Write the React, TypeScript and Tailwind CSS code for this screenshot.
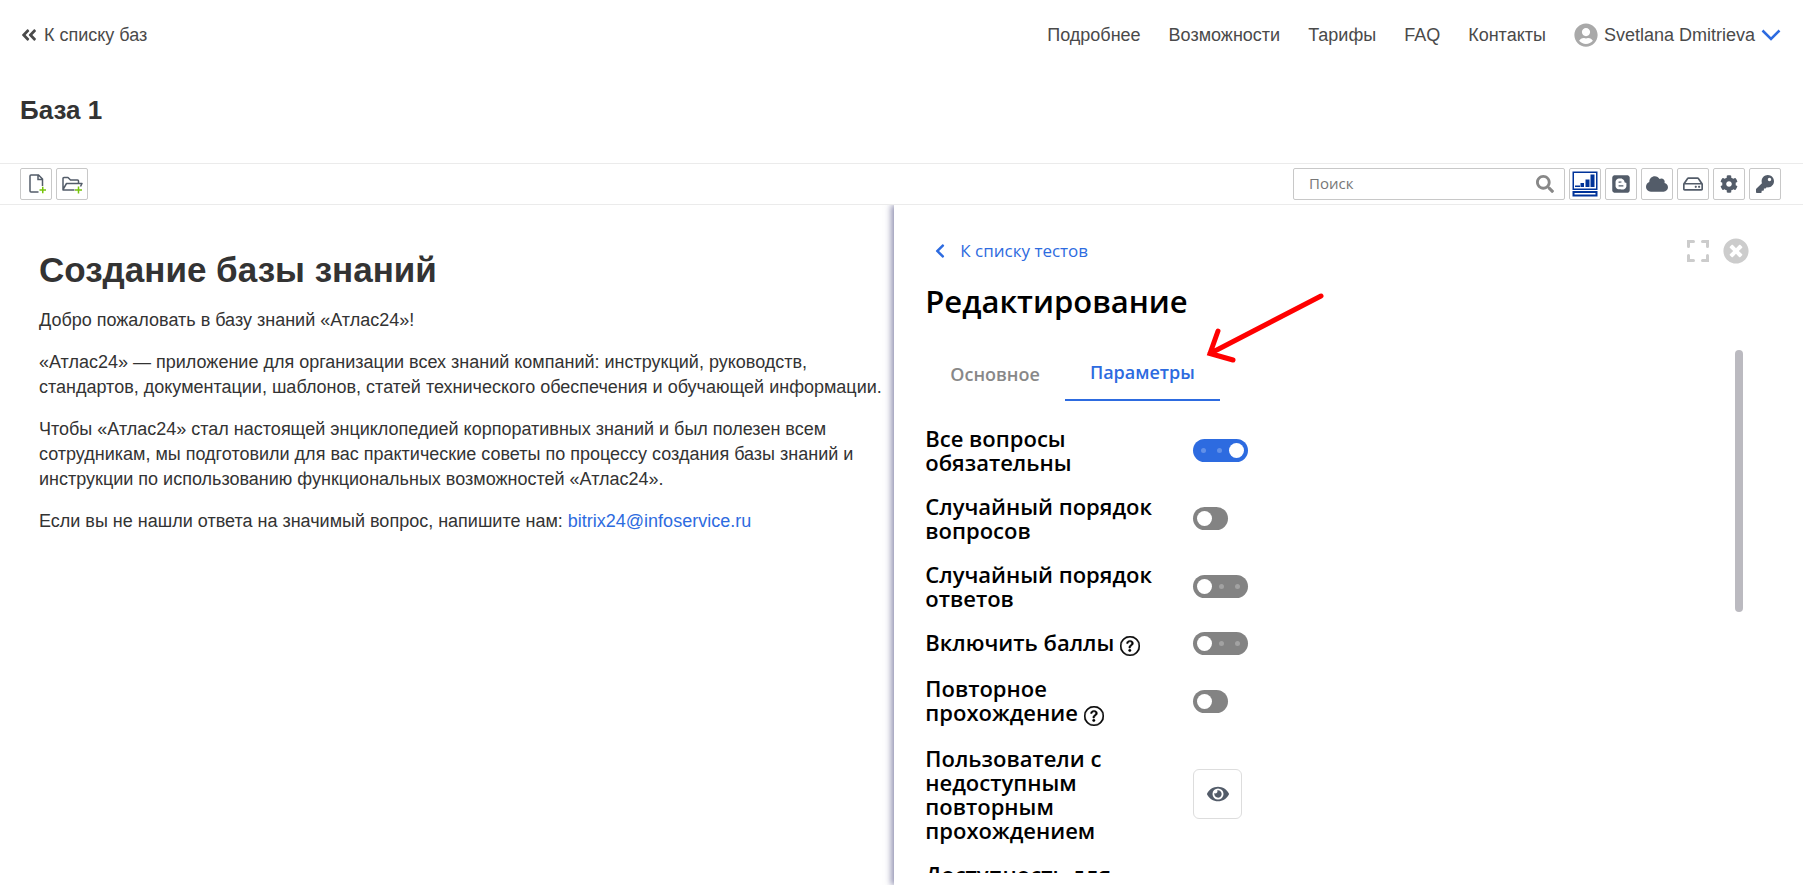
import type { ReactNode } from "react";
import { useState } from "react";
import {
  FaAngleDoubleLeft,
  FaBlogger,
  FaChevronLeft,
  FaCloud,
  FaCog,
  FaEye,
  FaKey,
  FaRegHdd,
  FaSearch,
  FaTimesCircle,
  FaUserCircle,
} from "react-icons/fa";
import { BsQuestionCircle } from "react-icons/bs";

const navLinks = ["Подробнее", "Возможности", "Тарифы", "FAQ", "Контакты"];

export default function App() {
  return (
    <div className="flex h-screen flex-col overflow-hidden bg-white font-['Liberation_Sans',Arial,sans-serif] text-lg text-[#333]">
      <Header />
      <h1 className="px-5 pt-[22px] pb-[35px] text-[26px] leading-9 font-bold">База 1</h1>
      <Toolbar />
      <main className="flex min-h-0 flex-1 overflow-hidden">
        <Article />
        <TestPanel />
      </main>
    </div>
  );
}

function Header() {
  return (
    <header className="flex h-[70px] shrink-0 items-center justify-between pr-[22px] pl-5 text-[#4a4a4a]">
      <a href="#bases" className="flex items-center gap-1.5">
        <FaAngleDoubleLeft className="size-[18px]" />
        К списку баз
      </a>
      <nav className="flex items-center gap-7">
        {navLinks.map((label) => (
          <a key={label} href="#nav">
            {label}
          </a>
        ))}
        <button type="button" className="flex items-center gap-1.5">
          <FaUserCircle className="size-6 text-[#a9a9a9]" />
          Svetlana Dmitrieva
          <svg viewBox="0 0 20 12" className="h-3 w-5" fill="none" stroke="#2d6be0" strokeWidth="2.5">
            <path d="M1.5 1.5 10 10l8.500-8.500" />
          </svg>
        </button>
      </nav>
    </header>
  );
}

function ToolButton({ label, children }: { label: string; children: ReactNode }) {
  return (
    <button
      type="button"
      aria-label={label}
      className="flex size-8 items-center justify-center rounded-xs border border-[#c8c8c8] bg-white text-[#535c69]"
    >
      {children}
    </button>
  );
}

function Toolbar() {
  return (
    <div className="flex shrink-0 items-center justify-between border-y border-[#ebebeb] py-1 pr-[22px] pl-5">
      <div className="flex gap-1">
        <ToolButton label="Новая статья">
          <svg viewBox="0 0 20 22" className="h-[22px] w-5" fill="none" stroke="currentColor" strokeWidth="1.5">
            <path d="M12.500 19H5a1 1 0 0 1-1-1V3a1 1 0 0 1 1-1h7.500l4 4v7M12 2v4.500h4.500" />
            <path d="M13.500 17h6.500M16.750 13.750v6.500" stroke="#76c40b" />
          </svg>
        </ToolButton>
        <ToolButton label="Новая папка">
          <svg viewBox="0 0 22 20" className="h-5 w-[22px]" fill="none" stroke="currentColor" strokeWidth="1.5" strokeLinejoin="round">
            <path d="M13.500 16H2V4.500a1 1 0 0 1 1-1h4l2.500 2.500h7a1 1 0 0 1 1 1v2M2 15.500l3.500-6H21l-1.500 3" />
            <path d="M14 16h7M17.500 12.500v7" stroke="#76c40b" />
          </svg>
        </ToolButton>
      </div>
      <div className="flex gap-1">
        <div className="flex h-8 w-[272px] items-center rounded-xs border border-[#c8c8c8] pr-[10px] pl-[15px]">
          <input
            type="search"
            aria-label="Поиск"
            placeholder="Поиск"
            className="min-w-0 flex-1 font-['Open_Sans',sans-serif] text-[15px] outline-none placeholder:text-[#777]"
          />
          <FaSearch className="size-[18px] text-[#888]" />
        </div>
        <ToolButton label="Статистика">
          <svg viewBox="0 0 26 26" className="size-[26px] shrink-0" fill="#003399">
            <path fillRule="evenodd" d="M.500.500h25v18.500H.500zM2 2v15.500h22V2z" />
            <path d="M3 14.500h5V16H3zM8.500 12H12v4H8.500zM13.500 8.500h4V16h-4zM18.500 3.500h4V16h-4z" />
            <path fillRule="evenodd" d="M.500 20h25v5.500H.500zM2.500 22v1.500h21V22z" />
          </svg>
        </ToolButton>
        <ToolButton label="Блог">
          <FaBlogger className="size-5" />
        </ToolButton>
        <ToolButton label="Облако">
          <FaCloud className="size-[22px]" />
        </ToolButton>
        <ToolButton label="Диск">
          <FaRegHdd className="size-5" />
        </ToolButton>
        <ToolButton label="Настройки">
          <FaCog className="size-[18px]" />
        </ToolButton>
        <ToolButton label="Права доступа">
          <FaKey className="size-[18px]" />
        </ToolButton>
      </div>
    </div>
  );
}

function Article() {
  return (
    <article className="min-w-0 flex-1 space-y-[17px] pt-11 pr-3 pl-[39px] leading-[25px]">
      <h2 className="text-[35px] leading-[42px] font-bold">Создание базы знаний</h2>
      <p>Добро пожаловать в базу знаний «Атлас24»!</p>
      <p>
        «Атлас24» — приложение для организации всех знаний компаний: инструкций, руководств, стандартов,
        документации, шаблонов, статей технического обеспечения и обучающей информации.
      </p>
      <p>
        Чтобы «Атлас24» стал настоящей энциклопедией корпоративных знаний и был полезен всем сотрудникам, мы
        подготовили для вас практические советы по процессу создания базы знаний и инструкции по использованию
        функциональных возможностей «Атлас24».
      </p>
      <p>
        Если вы не нашли ответа на значимый вопрос, напишите нам:{" "}
        <a href="mailto:bitrix24@infoservice.ru" className="text-[#2d6be0]">
          bitrix24@infoservice.ru
        </a>
      </p>
    </article>
  );
}

function TestPanel() {
  return (
    <section className="flex w-[50.4%] flex-col bg-white pb-3 pl-[31px] font-['Open_Sans','Noto_Sans',sans-serif] text-black shadow-[-3px_0_6px_rgba(50,50,110,0.5)]">
      <div className="flex items-center justify-between pt-8 pr-[54px]">
        <a href="#tests" className="flex items-center gap-3 pl-[7px] text-[17px] leading-7 text-[#2d6be0]">
          <FaChevronLeft className="size-4" />
          К списку тестов
        </a>
        <div className="flex gap-[13px] text-[#ccc]">
          <button type="button" aria-label="Развернуть">
            <svg viewBox="0 0 24 24" className="size-6" fill="none" stroke="currentColor" strokeWidth="3" strokeLinecap="round">
              <path d="M2.500 7.500v-5h5M16.500 2.500h5v5M21.500 16.500v5h-5M7.500 21.500h-5v-5" />
            </svg>
          </button>
          <button type="button" aria-label="Закрыть">
            <FaTimesCircle className="size-[26px]" />
          </button>
        </div>
      </div>
      <h2 className="mt-[14px] text-[31px] leading-[44px] font-semibold">Редактирование</h2>
      <div className="relative mt-[27px] mr-[60px] flex min-h-0 flex-1">
        <div className="min-w-0 flex-1 overflow-hidden">
          <Tabs />
          <Settings />
        </div>
        <div className="h-1/2 w-2 rounded-full bg-[#bbbac0]" />
        <Pointer />
      </div>
    </section>
  );
}

function Pointer() {
  return (
    <svg
      viewBox="0 0 119 70"
      className="pointer-events-none absolute -top-[57px] left-[281px] h-[70px] w-[119px]"
      fill="none"
      stroke="#f00"
      strokeWidth="5"
      strokeLinecap="round"
    >
      <path d="M115 3 4 60.500M12 38 4 60.500l23 6.500" />
    </svg>
  );
}

function Tabs() {
  return (
    <div role="tablist" className="flex text-lg leading-7 font-semibold">
      <button type="button" role="tab" aria-selected={false} className="px-[25px] pt-2.5 pb-[13px] text-[#888]">
        Основное
      </button>
      <button
        type="button"
        role="tab"
        aria-selected
        className="border-b-2 border-[#2d6be0] px-[25px] pt-2 pb-[13px] text-[#2d6be0]"
      >
        Параметры
      </button>
    </div>
  );
}

function Settings() {
  return (
    <div className="mt-[25px] space-y-5 text-[22px] leading-6 font-semibold">
      <SwitchRow label="Все вопросы обязательны" wide on />
      <SwitchRow label="Случайный порядок вопросов" />
      <SwitchRow label="Случайный порядок ответов" wide />
      <SwitchRow label="Включить баллы" wide help />
      <SwitchRow label="Повторное прохождение" help />
      <Row label="Пользователи с недоступным повторным прохождением">
        <button
          type="button"
          aria-label="Показать пользователей"
          className="flex h-[50px] w-[49px] items-center justify-center rounded-md border border-[#ddd] text-[#535c69]"
        >
          <FaEye className="size-[22px]" />
        </button>
      </Row>
      <Row label="Доступность для" />
    </div>
  );
}

function Row({ label, children }: { label: ReactNode; children?: ReactNode }) {
  return (
    <div className="flex items-center">
      <div className="w-[268px] shrink-0 pr-8">{label}</div>
      {children}
    </div>
  );
}

type SwitchRowProps = { label: string; wide?: boolean; on?: boolean; help?: boolean };

function SwitchRow({ label, wide = false, on = false, help = false }: SwitchRowProps) {
  const [checked, setChecked] = useState(on);

  return (
    <label className="block">
      <Row
        label={
          <>
            {label}
            {help && (
              <BsQuestionCircle className="ml-1.5 inline size-5 align-[-5px]" stroke="currentColor" strokeWidth={0.4} />
            )}
          </>
        }
      >
        <input
          type="checkbox"
          role="switch"
          checked={checked}
          onChange={(event) => setChecked(event.target.checked)}
          className="peer sr-only"
        />
        <span
          className={`flex h-[23px] items-center justify-between rounded-full px-1 ${wide ? "w-[55px]" : "w-[35px]"} ${
            checked ? "flex-row-reverse bg-[#2d6be0]" : "bg-[#838383]"
          }`}
        >
          <span className="size-[15px] rounded-full bg-white" />
          {wide && (
            <>
              <span className="size-[5px] rounded-full bg-white/25" />
              <span className="mx-1 size-[5px] rounded-full bg-white/25" />
            </>
          )}
        </span>
      </Row>
    </label>
  );
}
